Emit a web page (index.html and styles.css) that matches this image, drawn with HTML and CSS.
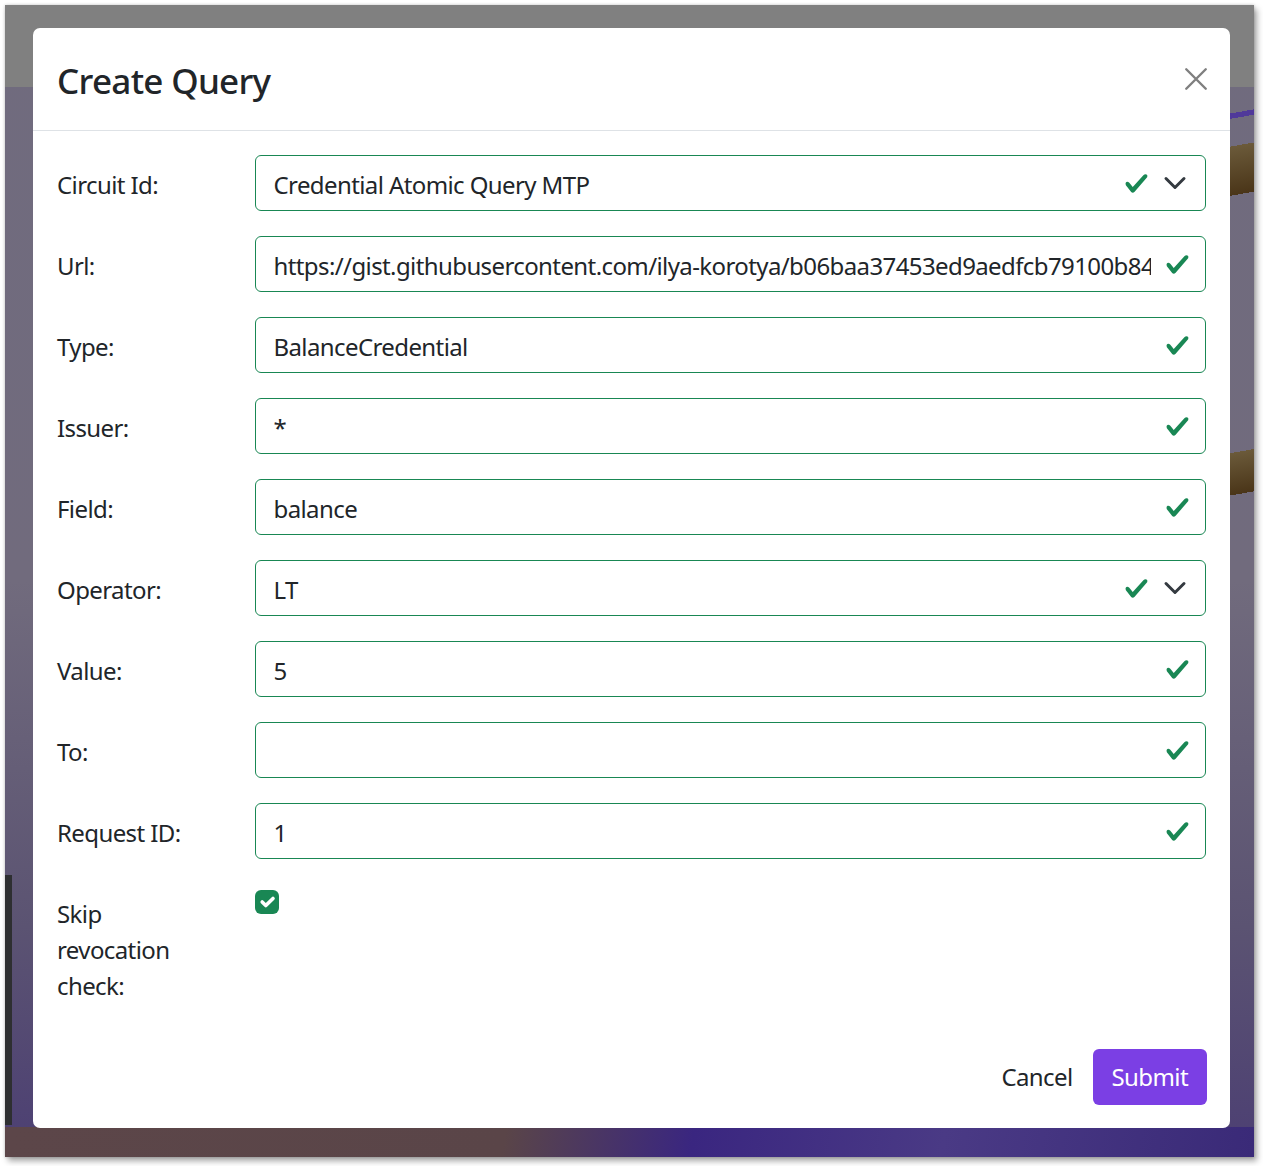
FILE: index.html
```html
<!DOCTYPE html>
<html lang="en">
<head>
<meta charset="utf-8">
<title>Create Query</title>
<link rel="stylesheet" href="styles.css">
</head>
<body>
<div class="frame">
  <div class="modal">
    <div class="modal-header">
      <h4 class="modal-title">Create Query</h4>
      <button class="btn-close" aria-label="Close">
        <svg viewBox="0 0 16 16" width="24" height="24"><path d="M1.5 1.5 14.5 14.5M14.5 1.5 1.5 14.5" stroke="#7f7f7f" stroke-width="1.6" stroke-linecap="round" fill="none"/></svg>
      </button>
    </div>
    <div class="modal-body">
      <div class="row">
        <label class="col-label">Circuit Id:</label>
        <div class="control select">
          <span class="value">Credential Atomic Query MTP</span>
          <svg class="ok" viewBox="0 0 8 8"><path fill="#198754" d="M2.3 6.73.6 4.53c-.4-1.040.46-1.4 1.1-.8l1.1 1.4 3.4-3.8c.6-.63 1.6-.27 1.2.7l-4 4.6c-.43.5-.8.4-1.1.1z"/></svg>
          <svg class="chev" viewBox="0 0 16 16"><path d="m2 5 6 6 6-6" fill="none" stroke="#343a40" stroke-width="2" stroke-linecap="round" stroke-linejoin="round"/></svg>
        </div>
      </div>
      <div class="row">
        <label class="col-label">Url:</label>
        <div class="control">
          <span class="value">https://gist.githubusercontent.com/ilya-korotya/b06baa37453ed9aedfcb79100b84c5b6/raw/credential-schema.json</span>
          <svg class="ok" viewBox="0 0 8 8"><path fill="#198754" d="M2.3 6.73.6 4.53c-.4-1.04.46-1.4 1.1-.8l1.1 1.4 3.4-3.8c.6-.63 1.6-.27 1.2.7l-4 4.6c-.43.5-.8.4-1.1.1z"/></svg>
        </div>
      </div>
      <div class="row">
        <label class="col-label">Type:</label>
        <div class="control">
          <span class="value">BalanceCredential</span>
          <svg class="ok" viewBox="0 0 8 8"><path fill="#198754" d="M2.3 6.73.6 4.53c-.4-1.04.46-1.4 1.1-.8l1.1 1.4 3.4-3.8c.6-.63 1.6-.27 1.2.7l-4 4.6c-.43.5-.8.4-1.1.1z"/></svg>
        </div>
      </div>
      <div class="row">
        <label class="col-label">Issuer:</label>
        <div class="control">
          <span class="value">*</span>
          <svg class="ok" viewBox="0 0 8 8"><path fill="#198754" d="M2.3 6.73.6 4.53c-.4-1.04.46-1.4 1.1-.8l1.1 1.4 3.4-3.8c.6-.63 1.6-.27 1.2.7l-4 4.6c-.43.5-.8.4-1.1.1z"/></svg>
        </div>
      </div>
      <div class="row">
        <label class="col-label">Field:</label>
        <div class="control">
          <span class="value">balance</span>
          <svg class="ok" viewBox="0 0 8 8"><path fill="#198754" d="M2.3 6.73.6 4.53c-.4-1.04.46-1.4 1.1-.8l1.1 1.4 3.4-3.8c.6-.63 1.6-.27 1.2.7l-4 4.6c-.43.5-.8.4-1.1.1z"/></svg>
        </div>
      </div>
      <div class="row">
        <label class="col-label">Operator:</label>
        <div class="control select">
          <span class="value">LT</span>
          <svg class="ok" viewBox="0 0 8 8"><path fill="#198754" d="M2.3 6.73.6 4.53c-.4-1.04.46-1.4 1.1-.8l1.1 1.4 3.4-3.8c.6-.63 1.6-.27 1.2.7l-4 4.6c-.43.5-.8.4-1.1.1z"/></svg>
          <svg class="chev" viewBox="0 0 16 16"><path d="m2 5 6 6 6-6" fill="none" stroke="#343a40" stroke-width="2" stroke-linecap="round" stroke-linejoin="round"/></svg>
        </div>
      </div>
      <div class="row">
        <label class="col-label">Value:</label>
        <div class="control">
          <span class="value">5</span>
          <svg class="ok" viewBox="0 0 8 8"><path fill="#198754" d="M2.3 6.73.6 4.53c-.4-1.04.46-1.4 1.1-.8l1.1 1.4 3.4-3.8c.6-.63 1.6-.27 1.2.7l-4 4.6c-.43.5-.8.4-1.1.1z"/></svg>
        </div>
      </div>
      <div class="row">
        <label class="col-label">To:</label>
        <div class="control">
          <span class="value"></span>
          <svg class="ok" viewBox="0 0 8 8"><path fill="#198754" d="M2.3 6.73.6 4.53c-.4-1.04.46-1.4 1.1-.8l1.1 1.4 3.4-3.8c.6-.63 1.6-.27 1.2.7l-4 4.6c-.43.5-.8.4-1.1.1z"/></svg>
        </div>
      </div>
      <div class="row">
        <label class="col-label">Request ID:</label>
        <div class="control">
          <span class="value">1</span>
          <svg class="ok" viewBox="0 0 8 8"><path fill="#198754" d="M2.3 6.73.6 4.53c-.4-1.04.46-1.4 1.1-.8l1.1 1.4 3.4-3.8c.6-.63 1.6-.27 1.2.7l-4 4.6c-.43.5-.8.4-1.1.1z"/></svg>
        </div>
      </div>
      <div class="row last">
        <label class="col-label">Skip revocation check:</label>
        <div class="check-wrap">
          <span class="checkbox">
            <svg viewBox="0 0 20 20"><path d="m6 10 3 3 6-6" fill="none" stroke="#fff" stroke-width="3" stroke-linecap="round" stroke-linejoin="round"/></svg>
          </span>
        </div>
      </div>
    </div>
    <div class="modal-footer">
      <button class="btn btn-link">Cancel</button>
      <button class="btn btn-primary">Submit</button>
    </div>
  </div>
</div>
</body>
</html>
```

FILE: styles.css
```css
* { box-sizing: border-box; }

html, body {
  margin: 0;
  padding: 0;
  background: #ffffff;
}

body {
  font-family: "Noto Sans", "Open Sans", "Liberation Sans", sans-serif;
  color: #212529;
  width: 1263px;
  height: 1166px;
  overflow: hidden;
}

.frame {
  margin: 5px 0 0 5px;
  width: 1249px;
  height: 1152px;
  padding: 23px 0 0 28px;
  box-shadow: 3px 4px 6px rgba(0, 0, 0, 0.35), 0 0 3px rgba(0, 0, 0, 0.2);
  background:
    linear-gradient(#808080, #808080) top left / 100% 82px no-repeat,
    linear-gradient(170deg, transparent 0 20%, #50399a 20%, #50399a 32%, transparent 32%) right 100px / 26px 40px no-repeat,
    linear-gradient(170deg, transparent 0 18%, #6b5a3a 18%, #4a3518 70%, transparent 70%) right 125px / 26px 90px no-repeat,
    linear-gradient(170deg, transparent 0 22%, #6b5a3a 22%, #4a3518 72%, transparent 72%) right 430px / 26px 80px no-repeat,
    linear-gradient(90deg, #2e2f31 0, #2e2f31 7px, transparent 7px) left 870px / 28px 250px no-repeat,
    linear-gradient(100deg, #5c4649 0, #5a4548 40%, #3a2680 55%, #4a3a85 75%, #3a2a78 100%) left bottom / 100% 30px no-repeat,
    linear-gradient(180deg, #706b7e 0, #716b7d 50%, #5b5372 80%, #4c3f73 100%);
}

.modal {
  width: 1197px;
  height: 1100px;
  background: #ffffff;
  border-radius: 7px;
  display: flex;
  flex-direction: column;
}

.modal-header {
  height: 103px;
  flex: none;
  border-bottom: 1px solid #dee2e6;
  padding: 0 22px 0 24px;
  display: flex;
  align-items: center;
  justify-content: space-between;
}

.modal-title {
  margin: 0;
  font-size: 35px;
  font-weight: 500;
  line-height: 1.2;
  letter-spacing: -0.7px;
  color: #212529;
  padding-top: 3px;
}

.btn-close {
  border: 0;
  background: transparent;
  padding: 0;
  width: 24px;
  height: 24px;
  display: flex;
}

.btn-close svg { width: 24px; height: 24px; }

.modal-body {
  padding: 24px 24px 13px 24px;
  display: flex;
  flex-direction: column;
  gap: 25px;
}

.row {
  display: grid;
  grid-template-columns: 161.5px 951.5px;
  column-gap: 36px;
  align-items: start;
}

.col-label {
  font-size: 24px;
  line-height: 36px;
  letter-spacing: -0.6px;
  padding: 12px 0 8px;
}

.control {
  height: 56px;
  border: 1px solid #198754;
  border-radius: 6px;
  display: flex;
  align-items: center;
  padding: 0 15px 0 18px;
  font-size: 24px;
  line-height: 36px;
  letter-spacing: -0.6px;
}

.control .value {
  flex: 1;
  white-space: nowrap;
  overflow: hidden;
  min-width: 0;
  margin-right: 14px;
  padding-top: 3px;
}

.control .ok {
  width: 25px;
  height: 25px;
  flex: none;
}

.control.select .value { margin-right: 18px; }

.control .chev {
  width: 24px;
  height: 24px;
  flex: none;
  margin-left: 14px;
  margin-right: 3px;
}

.check-wrap {
  padding-top: 6px;
}

.checkbox {
  width: 24px;
  height: 24px;
  border-radius: 6px;
  background: #198754;
  display: flex;
}

.checkbox svg { width: 24px; height: 24px; }

.modal-footer {
  padding: 24px 23px 0 24px;
  display: flex;
  justify-content: flex-end;
  gap: 1px;
}

.btn {
  font-family: inherit;
  font-size: 24px;
  line-height: 36px;
  letter-spacing: -0.6px;
  padding: 9px 18px;
  border: 1px solid transparent;
  border-radius: 6px;
  height: 56px;
}

.btn-link {
  background: transparent;
  color: #212529;
}

.btn-primary {
  background: #7b3fe4;
  color: #ffffff;
  padding: 9px 18px;
}
```
